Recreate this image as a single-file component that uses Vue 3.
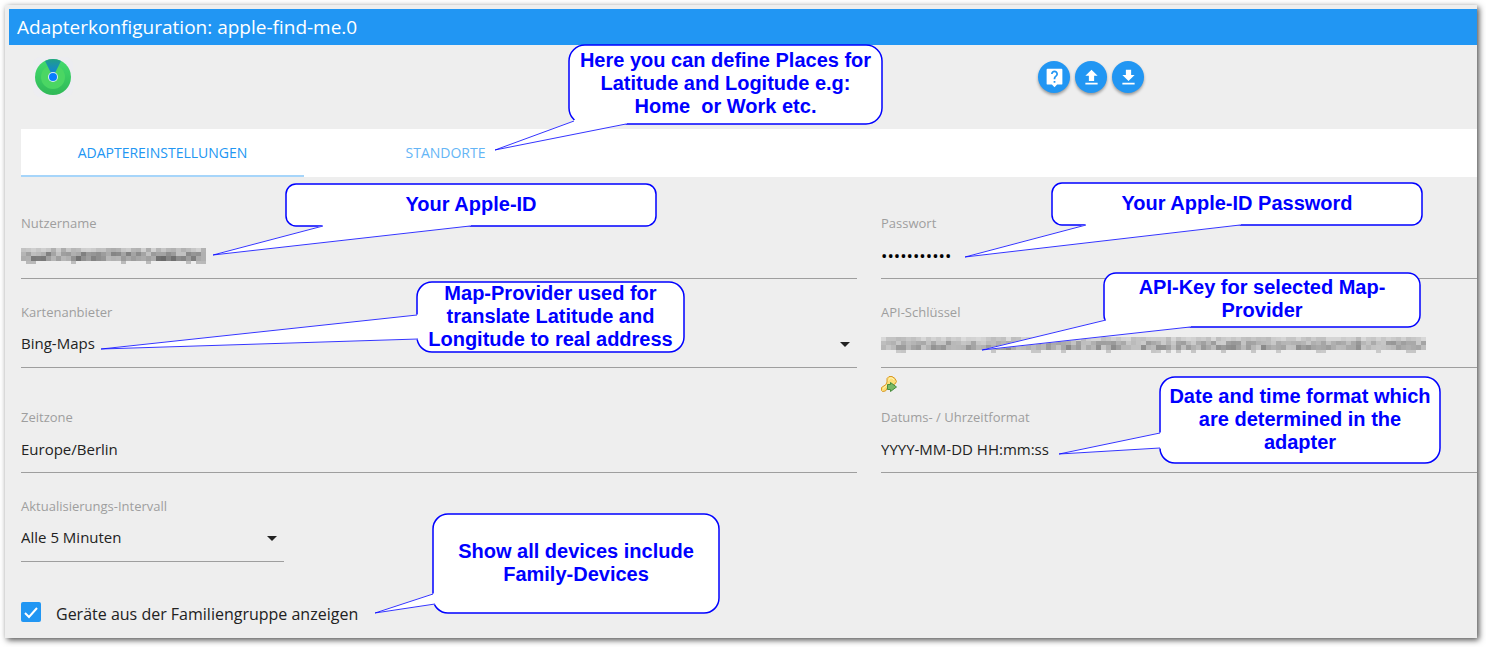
<script setup>
import { ref } from 'vue'

const username = ref('')
const password = ref('12345678901')
const apiKey = ref('')
const provider = ref('Bing-Maps')
const timezone = ref('Europe/Berlin')
const format = ref('YYYY-MM-DD HH:mm:ss')
const interval = ref('Alle 5 Minuten')
const family = ref(true)
const activeTab = ref(0)
const tabs = ['Adaptereinstellungen', 'Standorte']

// Pixelated cover for private values: three text rows and a sparse descender row
function mosaic(columns, seed, darkness) {
  const rows = [
    { y: 0, h: 4, level: 0.5 },
    { y: 4, h: 4, level: 0.85 },
    { y: 8, h: 5, level: 1 },
    { y: 13, h: 3, level: 0.4 }
  ]
  const cells = []
  rows.forEach((row, r) => {
    for (let i = 0; i < columns; i++) {
      const n = Math.abs(Math.sin((i + 1) * 12.9898 + (r + seed) * 78.233) * 43758.5453) % 1
      if (r === 3 && n < 0.82) continue
      cells.push({ x: i * 5, y: row.y, h: row.h, o: (row.level * darkness * (0.4 + n * 0.6)).toFixed(2) })
    }
  })
  return cells
}
const userMosaic = mosaic(37, 3, 0.55)
const keyMosaic = mosaic(109, 8, 0.42)

// Annotation bubbles: box, corner radius, tail base points a and b, tail tip
const callouts = [
  { x: 569, y: 45, w: 313, h: 79, r: 16, a: [574, 121], tip: [495, 150], b: [626, 124], in: [[626, 118], [580, 114]], lines: ['Here you can define Places for', 'Latitude and Logitude e.g:', 'Home \u00a0or Work etc.'] },
  { x: 286, y: 184, w: 370, h: 42, r: 10, a: [323, 226], tip: [213, 255], b: [470, 226], in: [[470, 222], [323, 222]], lines: ['Your Apple-ID'] },
  { x: 417, y: 282, w: 267, h: 70, r: 15, a: [417, 315], tip: [101, 349], b: [418, 339], in: [[422, 339], [422, 315]], lines: ['Map-Provider used for', 'translate Latitude and', 'Longitude to real address'] },
  { x: 1052, y: 183, w: 370, h: 42, r: 10, a: [1086, 225], tip: [965, 257], b: [1240, 225], in: [[1240, 221], [1086, 221]], lines: ['Your Apple-ID Password'] },
  { x: 1104, y: 273, w: 316, h: 54, r: 12, a: [1106, 320], tip: [982, 350], b: [1190, 327], in: [[1190, 322], [1112, 317]], lines: ['API-Key for selected Map-', 'Provider'] },
  { x: 1160, y: 377, w: 280, h: 86, r: 15, a: [1160, 433], tip: [1059, 454], b: [1160, 448], in: [[1165, 448], [1165, 433]], lines: ['Date and time format which', 'are determined in the', 'adapter'] },
  { x: 433, y: 514, w: 286, h: 99, r: 15, a: [433, 594], tip: [375, 613], b: [435, 604], in: [[440, 603], [440, 594]], lines: ['Show all devices include', 'Family-Devices'] }
]
const fillPoints = (c) => [c.a, c.tip, c.b, ...c.in].map((p) => p.join(',')).join(' ')
const linePoints = (c) => [c.a, c.tip, c.b].map((p) => p.join(',')).join(' ')
</script>

<template>
  <div class="page">
    <main class="panel">
      <h1 class="title">Adapterkonfiguration: apple-find-me.0</h1>

      <div class="content">
        <header class="toolbar">
          <svg class="logo" viewBox="0 0 40 40" aria-label="apple-find-me">
            <defs>
              <linearGradient id="ring" x1="0" y1="0" x2="0" y2="1">
                <stop offset="0" stop-color="#43dc6c" />
                <stop offset="1" stop-color="#30b957" />
              </linearGradient>
              <linearGradient id="cone" x1="0" y1="0" x2="0" y2="1">
                <stop offset="0" stop-color="#229f86" />
                <stop offset="1" stop-color="#0c7bf0" />
              </linearGradient>
            </defs>
            <rect width="40" height="40" rx="8" fill="#ededf1" />
            <circle cx="20" cy="20" r="18" fill="url(#ring)" />
            <circle cx="20" cy="20" r="12" fill="#4bd663" />
            <path d="M20 20 12 4A18 18 0 0 1 28 4Z" fill="url(#cone)" />
            <circle cx="20" cy="20" r="5" fill="#d5ecf5" />
            <circle cx="20" cy="20" r="4" fill="#087cff" />
          </svg>
          <div class="actions">
            <button class="round" type="button" aria-label="Hilfe">
              <svg viewBox="0 0 24 24"><path d="M20 2H4c-.6 0-1 .4-1 1v16c0 .6.4 1 1 1h5l3 3 3-3h5c.6 0 1-.4 1-1V3c0-.6-.4-1-1-1zm-7 16h-2v-2h2v2zm2.070-7.750l-.9.920C13.450 11.900 13 12.500 13 14h-2v-.5c0-1.100.450-2.100 1.170-2.830l1.240-1.260c.370-.360.590-.860.590-1.410 0-1.100-.9-2-2-2s-2 .9-2 2H8c0-2.210 1.790-4 4-4s4 1.790 4 4c0 .880-.360 1.680-.930 2.250z" /></svg>
            </button>
            <button class="round" type="button" aria-label="Hochladen">
              <svg viewBox="0 0 24 24"><path d="M9 16h6v-6h4l-7-7-7 7h4zM5 18h14v2H5z" /></svg>
            </button>
            <button class="round" type="button" aria-label="Herunterladen">
              <svg viewBox="0 0 24 24"><path d="M19 9h-4V3H9v6H5l7 7 7-7zM5 18v2h14v-2H5z" /></svg>
            </button>
          </div>
        </header>

        <nav class="tabs" role="tablist">
          <button
            v-for="(tab, i) in tabs"
            :key="tab"
            class="tab"
            :class="{ active: i === activeTab }"
            type="button"
            role="tab"
            :aria-selected="i === activeTab"
            @click="activeTab = i"
          >{{ tab }}</button>
        </nav>

        <form class="form" @submit.prevent>
          <div class="field">
            <label for="username">Nutzername</label>
            <input id="username" v-model="username" type="text" />
            <svg class="cover" width="185" height="16" aria-hidden="true">
              <rect v-for="(c, i) in userMosaic" :key="i" :x="c.x" :y="c.y" width="5" :height="c.h" :fill-opacity="c.o" />
            </svg>
          </div>
          <div class="field">
            <label for="password">Passwort</label>
            <input id="password" v-model="password" class="secret" type="password" />
          </div>

          <div class="field">
            <label for="provider">Kartenanbieter</label>
            <select id="provider" v-model="provider"><option>Bing-Maps</option></select>
            <svg class="arrow" viewBox="0 0 10 5" aria-hidden="true"><path d="M0 0h10L5 5z" /></svg>
          </div>
          <div>
            <div class="field">
              <label for="apikey">API-Schlüssel</label>
              <input id="apikey" v-model="apiKey" type="text" />
              <svg class="cover" width="545" height="16" aria-hidden="true">
                <rect v-for="(c, i) in keyMosaic" :key="i" :x="c.x" :y="c.y" width="5" :height="c.h" :fill-opacity="c.o" />
              </svg>
            </div>
            <button class="key" type="button" aria-label="API-Schlüssel anfordern">
              <svg viewBox="0 0 16 16">
                <path d="M6 2.500 8 .5h3l3 2 1.500 3L14 8l-3 1.500H8L4.500 15l-3 .5-1-1v-3L5 8.500 6 6Z" fill="#fbdf79" stroke="#d99a29" />
                <path d="M7.500 4.500 9 2h2l2 2M2 12.500l4-3.500" fill="none" stroke="#fff3b5" />
                <path d="M6.500 8.500h3v-2l6 4.500-6 4.500v-2h-3z" fill="#79b866" stroke="#478d3d" />
              </svg>
            </button>
          </div>

          <div class="field field-tight">
            <label for="timezone">Zeitzone</label>
            <input id="timezone" v-model="timezone" type="text" />
          </div>
          <div class="field field-tight">
            <label for="format">Datums- / Uhrzeitformat</label>
            <input id="format" v-model="format" type="text" />
          </div>

          <div class="field field-short">
            <label for="interval">Aktualisierungs-Intervall</label>
            <select id="interval" v-model="interval"><option>Alle 5 Minuten</option></select>
            <svg class="arrow" viewBox="0 0 10 5" aria-hidden="true"><path d="M0 0h10L5 5z" /></svg>
          </div>

          <div class="check">
            <span class="box">
              <input id="family" v-model="family" type="checkbox" />
              <svg v-if="family" viewBox="0 0 20 20" aria-hidden="true"><path d="M4 11l4 4 8-9" /></svg>
            </span>
            <label for="family">Geräte aus der Familiengruppe anzeigen</label>
          </div>
        </form>
      </div>
    </main>

    <div class="notes">
      <svg class="shapes" aria-hidden="true">
        <g v-for="(c, i) in callouts" :key="i">
          <rect class="bubble" :x="c.x" :y="c.y" :width="c.w" :height="c.h" :rx="c.r" />
          <polygon class="tail" :points="fillPoints(c)" />
          <polyline class="edge" :points="linePoints(c)" />
        </g>
      </svg>
      <p
        v-for="(c, i) in callouts"
        :key="i"
        class="note"
        :style="{ left: c.x + 'px', top: c.y + 'px', width: c.w + 'px', height: c.h + 'px' }"
      >
        <span v-for="line in c.lines" :key="line">{{ line }}</span>
      </p>
    </div>
  </div>
</template>

<style>
body {
  margin: 0;
  background: #fff;
}
</style>

<style scoped>
* {
  box-sizing: border-box;
}
.page {
  position: relative;
  padding: 5px 9px 9px 5px;
  font-family: "Open Sans", "Noto Sans", sans-serif;
  color: #222;
}
.panel {
  padding: 4px 0 12px 4px;
  background: #eee;
  box-shadow: 2px 2px 6px rgba(0, 0, 0, 0.7);
}
.title {
  margin: 0;
  padding: 0 8px;
  background: #2196f3;
  color: #fff;
  font-size: 19px;
  font-weight: 400;
  line-height: 36px;
}
.content {
  padding-left: 12px;
}
.toolbar {
  display: flex;
  justify-content: space-between;
  height: 84px;
  padding: 12px 333px 0 12px;
}
.logo {
  width: 40px;
  height: 40px;
}
.actions {
  display: flex;
  gap: 5px;
  padding-top: 4px;
}
.round {
  display: flex;
  align-items: center;
  justify-content: center;
  width: 32px;
  height: 32px;
  padding: 0;
  border: 0;
  border-radius: 50%;
  background: #2196f3;
  box-shadow: 0 2px 3px rgba(0, 0, 0, 0.35);
}
.round svg {
  width: 21px;
  height: 21px;
  fill: #fff;
}
.tabs {
  display: flex;
  height: 48px;
  background: #fff;
}
.tab {
  width: 283px;
  padding: 0;
  border: 0;
  border-bottom: 2px solid transparent;
  background: none;
  color: #64b5f6;
  font-family: inherit;
  font-size: 14px;
  text-transform: uppercase;
}
.tab.active {
  border-bottom-color: #a6d5fa;
  color: #2196f3;
}
.form {
  display: grid;
  grid-template-columns: 836fr 596fr;
  align-items: start;
  column-gap: 24px;
  padding-top: 13px;
}
.field {
  position: relative;
  padding-top: 25px;
}
.field-tight {
  padding-top: 17px;
}
.field-short {
  width: 263px;
}
.field label {
  display: block;
  color: #9e9e9e;
  font-size: 13px;
  line-height: 16px;
}
.field input,
.field select {
  display: block;
  width: 100%;
  height: 48px;
  margin: 0;
  padding: 0;
  border: 0;
  border-bottom: 1px solid #9e9e9e;
  border-radius: 0;
  outline: 0;
  appearance: none;
  background: transparent;
  color: #222;
  font-family: inherit;
  font-size: 15px;
}
.field select {
  padding-bottom: 2px;
}
.field .secret {
  padding-top: 2px;
  color: #000;
  font-size: 17px;
}
.cover {
  position: absolute;
  left: 0;
  bottom: 15px;
}
.arrow {
  position: absolute;
  right: 7px;
  bottom: 21px;
  width: 10px;
  height: 5px;
  fill: #222;
}
.key {
  display: block;
  height: 24px;
  padding: 8px 0 0;
  border: 0;
  background: none;
}
.key svg {
  display: block;
  width: 16px;
  height: 16px;
}
.check {
  display: flex;
  grid-column: 1 / -1;
  align-items: flex-start;
  gap: 15px;
  padding-top: 40px;
}
.check label {
  font-size: 16px;
  line-height: 24px;
}
.box {
  position: relative;
  width: 20px;
  height: 20px;
}
.box input {
  display: block;
  width: 20px;
  height: 20px;
  margin: 0;
  border-radius: 2px;
  appearance: none;
  background: #2196f3;
}
.box svg {
  position: absolute;
  inset: 0;
  fill: none;
  stroke: #fff;
  stroke-width: 2;
  pointer-events: none;
}
.notes {
  position: absolute;
  inset: 0;
  pointer-events: none;
}
.shapes {
  display: block;
  width: 100%;
  height: 100%;
}
.bubble {
  fill: #fff;
  stroke: #00f;
  stroke-width: 1.5;
}
.tail {
  fill: #fff;
  stroke: #fff;
}
.edge {
  fill: none;
  stroke: #00f;
  stroke-width: 0.8;
}
.note {
  position: absolute;
  display: flex;
  flex-direction: column;
  align-items: center;
  justify-content: center;
  margin: 0;
  padding-bottom: 2px;
  color: #00f;
  font-family: "Liberation Sans", Arial, sans-serif;
  font-size: 20px;
  font-weight: 700;
  line-height: 23px;
  white-space: nowrap;
}
</style>
